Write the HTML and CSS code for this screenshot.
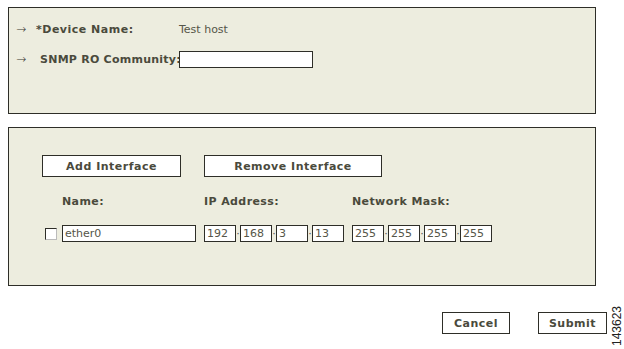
FILE: index.html
```html
<!DOCTYPE html>
<html>
<head>
<meta charset="utf-8">
<link rel="stylesheet" href="styles.css">
</head>
<body>
<div class="panel panel-top">
  <div class="field-row row-name">
    <span class="arrow">&rarr;</span>
    <span class="label">*Device Name:</span>
    <span class="value">Test host</span>
  </div>
  <div class="field-row row-snmp">
    <span class="arrow">&rarr;</span>
    <span class="label label-snmp">SNMP RO Community:</span>
    <span class="text-input community"></span>
  </div>
</div>
<div class="panel panel-if">
  <div class="btn-row">
    <span class="btn btn-add">Add Interface</span>
    <span class="btn btn-remove">Remove Interface</span>
  </div>
  <div class="head-row">
    <span class="col-check"></span>
    <span class="col-name head">Name:</span>
    <span class="col-ip head">IP Address:</span>
    <span class="col-mask head">Network Mask:</span>
  </div>
  <div class="if-row">
    <span class="col-check"><span class="checkbox"></span></span>
    <span class="col-name"><span class="text-input if-name">ether0</span></span>
    <span class="col-ip octets">
      <span class="octet">192</span><span class="sep">·</span><span class="octet">168</span><span class="sep">·</span><span class="octet">3</span><span class="sep">·</span><span class="octet">13</span>
    </span>
    <span class="col-mask octets">
      <span class="octet">255</span><span class="sep">·</span><span class="octet">255</span><span class="sep">·</span><span class="octet">255</span><span class="sep">·</span><span class="octet">255</span>
    </span>
  </div>
</div>
<div class="footer">
  <span class="btn btn-cancel">Cancel</span>
  <span class="btn btn-submit">Submit</span>
  <span class="fig-num">143623</span>
</div>
</body>
</html>
```
FILE: styles.css
```css
html, body {
  margin: 0;
  padding: 0;
  background: #ffffff;
}
body {
  padding: 7px 0 0 8px;
  font-family: "DejaVu Sans", Verdana, sans-serif;
  font-size: 11px;
  color: #4a4a3c;
}
.panel {
  box-sizing: border-box;
  width: 588px;
  background: #ededdf;
  border: 1px solid #2e2e28;
}
.panel-top {
  height: 107px;
  padding-top: 12px;
}
.field-row {
  display: flex;
  align-items: center;
  height: 18px;
  white-space: nowrap;
}
.row-snmp {
  margin-top: 12px;
}
.arrow {
  box-sizing: border-box;
  width: 27px;
  padding-left: 7px;
  font-size: 12px;
  font-weight: 300;
  color: #3a3a33;
}
.label {
  box-sizing: border-box;
  font-weight: bold;
  width: 143px;
  letter-spacing: 0.5px;
}
.label-snmp {
  padding-left: 4px;
  letter-spacing: 0.25px;
}
.value {
  color: #555548;
}
.text-input {
  box-sizing: border-box;
  display: inline-block;
  background: #fff;
  border: 1px solid #2e2e28;
  height: 17px;
  line-height: 15px;
  padding-left: 2px;
  color: #555548;
}
.community {
  width: 134px;
}
.panel-if {
  margin-top: 13px;
  height: 159px;
  padding: 27px 0 0 33px;
}
.btn {
  box-sizing: border-box;
  display: inline-flex;
  align-items: center;
  justify-content: center;
  background: #fff;
  border: 1px solid #2e2e28;
  height: 22px;
  font-weight: bold;
  color: #4a4a3c;
  letter-spacing: 0.5px;
}
.btn-row {
  display: flex;
  gap: 23px;
}
.btn-add { width: 139px; }
.btn-remove { width: 178px; }
.head-row, .if-row {
  display: flex;
  align-items: center;
}
.head-row {
  margin-top: 17px;
  height: 14px;
}
.if-row {
  margin-top: 17px;
}
.col-check {
  width: 20px;
  display: flex;
  padding-left: 3px;
  box-sizing: border-box;
}
.col-name { width: 142px; }
.col-ip { width: 148px; }
.head {
  font-weight: bold;
  letter-spacing: 0.4px;
}
.checkbox {
  box-sizing: border-box;
  width: 12px;
  height: 12px;
  background: #fff;
  border: 1px solid #2e2e28;
  border-right-color: #bbb;
  border-bottom-color: #bbb;
}
.if-name {
  width: 134px;
}
.octets {
  display: flex;
  align-items: center;
}
.octet {
  box-sizing: border-box;
  width: 32px;
  height: 17px;
  line-height: 15px;
  padding-left: 2px;
  background: #fff;
  border: 1px solid #2e2e28;
  color: #555548;
}
.sep {
  width: 4px;
  text-align: center;
  font-size: 11px;
  line-height: 15px;
  color: #555;
}
.footer {
  display: flex;
  align-items: flex-start;
  margin-top: 26px;
  padding-left: 434px;
}
.btn-cancel { width: 68px; }
.btn-submit { width: 69px; margin-left: 28px; }
.fig-num {
  font-family: "Liberation Sans", Arial, sans-serif;
  font-size: 12px;
  line-height: 11px;
  color: #222;
  writing-mode: vertical-rl;
  transform: rotate(180deg);
  margin-left: 5px;
  margin-top: -6px;
}
```
